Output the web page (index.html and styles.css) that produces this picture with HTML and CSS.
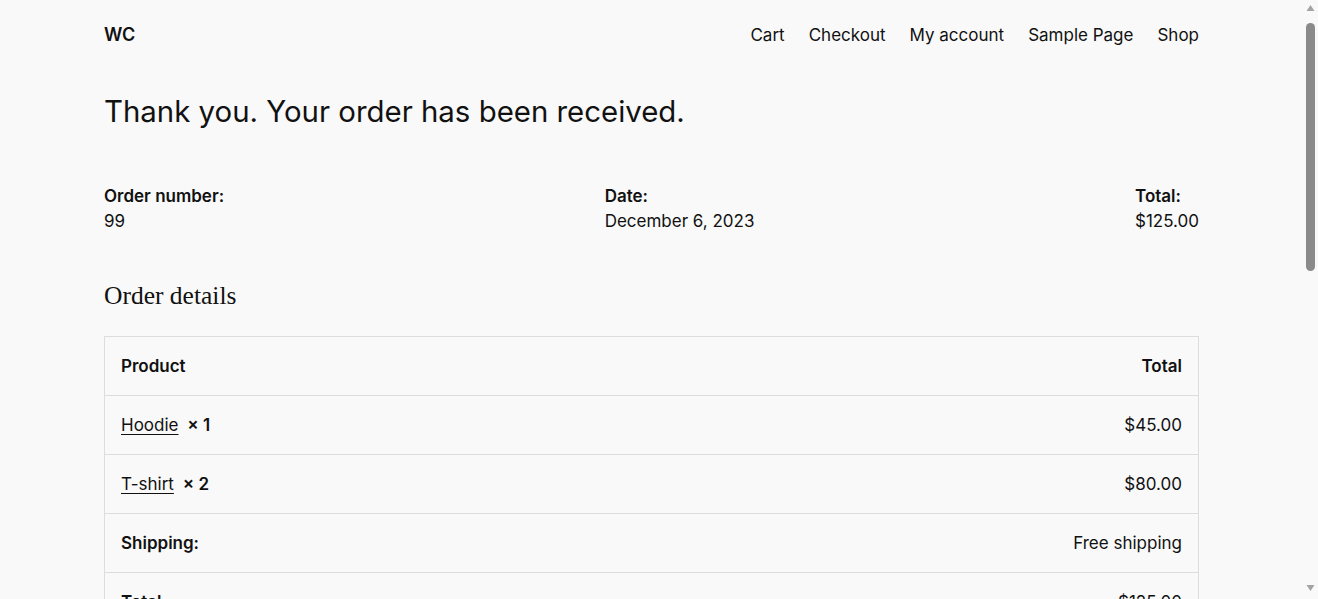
FILE: index.html
```html
<!DOCTYPE html>
<html lang="en">
<head>
<meta charset="utf-8">
<title>Order received – WC</title>
<link rel="stylesheet" href="styles.css">
</head>
<body>
<div class="page">
  <header class="site-header">
    <a class="site-title" href="#">WC</a>
    <nav class="site-nav">
      <a href="#">Cart</a>
      <a href="#">Checkout</a>
      <a href="#">My account</a>
      <a href="#">Sample Page</a>
      <a href="#">Shop</a>
    </nav>
  </header>
  <main class="content">
    <h1 class="notice">Thank you. Your order has been received.</h1>
    <ul class="overview">
      <li class="overview-item"><span class="label">Order number:</span><span class="value">99</span></li>
      <li class="overview-item"><span class="label">Date:</span><span class="value">December 6, 2023</span></li>
      <li class="overview-item"><span class="label">Total:</span><span class="value">$125.00</span></li>
    </ul>
    <h2 class="section-title">Order details</h2>
    <table class="order-table">
      <thead>
        <tr><th class="col-product">Product</th><th class="col-total">Total</th></tr>
      </thead>
      <tbody>
        <tr><td class="col-product"><a href="#">Hoodie</a> <strong class="qty">× 1</strong></td><td class="col-total">$45.00</td></tr>
        <tr><td class="col-product"><a href="#">T-shirt</a> <strong class="qty">× 2</strong></td><td class="col-total">$80.00</td></tr>
      </tbody>
      <tfoot>
        <tr><th class="col-product">Shipping:</th><td class="col-total">Free shipping</td></tr>
        <tr><th class="col-product">Total:</th><td class="col-total">$125.00</td></tr>
      </tfoot>
    </table>
    <h2 class="section-title">Billing address</h2>
    <address class="address">
      John Doe<br>
      123 Main Street<br>
      San Francisco, CA 94107<br>
      United States (US)<br>
      john.doe@example.com
    </address>
  </main>
  <footer class="site-footer">
    <a class="site-title" href="#">WC</a>
    <p class="footer-note">Designed with WordPress</p>
  </footer>
</div>
<div class="scrollbar" aria-hidden="true">
  <svg class="arrow" width="15" height="17" viewBox="0 0 15 17"><polygon points="3.5,11 11.5,11 7.5,5" fill="#a3a3a3"/></svg>
  <div class="track"><div class="thumb"></div></div>
  <svg class="arrow" width="15" height="17" viewBox="0 0 15 17"><polygon points="3.5,3 11.5,3 7.5,9" fill="#a3a3a3"/></svg>
</div>
</body>
</html>
```
FILE: styles.css
```css
html, body {
  margin: 0;
  padding: 0;
}
body {
  background: #f9f9f9;
  color: #111111;
  font-family: Inter, "Liberation Sans", sans-serif;
  font-size: 17px;
  line-height: 1.6;
}
a {
  color: #111111;
}
.page {
  margin-right: 15px;
}
.site-header {
  display: flex;
  justify-content: space-between;
  align-items: baseline;
  padding: 21px 104px 0;
}
.site-title {
  font-size: 18px;
  font-weight: 600;
  text-decoration: none;
  line-height: 28px;
}
.site-nav {
  display: flex;
  gap: 24px;
}
.site-nav a {
  font-size: 17px;
  text-decoration: none;
  line-height: 28px;
}
.content {
  padding: 0 104px;
}
.notice {
  margin: 45px 0 0;
  font-size: 29.4px;
  font-weight: 400;
  line-height: 36px;
}
.overview {
  list-style: none;
  margin: 53px 0 0;
  padding: 0;
  display: flex;
  justify-content: space-between;
}
.overview-item {
  display: flex;
  flex-direction: column;
}
.label {
  font-weight: 600;
  line-height: 26px;
}
.value {
  line-height: 25px;
}
.section-title {
  margin: 44px 0 0;
  font-family: "Liberation Serif", "DejaVu Serif", serif;
  font-weight: 400;
  font-size: 25.5px;
  line-height: 36px;
}
.order-table {
  margin-top: 22px;
  width: 100%;
  border-collapse: collapse;
  border: 1px solid #dddddd;
}
.order-table th,
.order-table td {
  border-top: 1px solid #dddddd;
  padding: 16px;
  line-height: 26px;
  text-align: left;
}
.order-table th {
  font-weight: 600;
}
.order-table .col-total {
  text-align: right;
}
.order-table td a {
  text-underline-offset: 3px;
  text-decoration-thickness: 1px;
}
.qty {
  font-weight: 600;
  margin-left: 4px;
}
.address {
  font-style: normal;
  margin-top: 20px;
  padding: 16px;
  border: 1px solid #dddddd;
}
.site-footer {
  padding: 120px 104px 80px;
  display: flex;
  justify-content: space-between;
  align-items: center;
}
.footer-note {
  margin: 0;
  font-size: 15px;
}
.scrollbar {
  position: fixed;
  top: 0;
  right: 0;
  width: 15px;
  height: 100vh;
  background: #f9f9f9;
  display: flex;
  flex-direction: column;
}
.arrow {
  flex: none;
  display: block;
}
.track {
  flex: 1;
  padding: 6px 3px 0 3px;
}
.thumb {
  height: 248px;
  background: #8a8a8a;
  border-radius: 5px;
}
```
